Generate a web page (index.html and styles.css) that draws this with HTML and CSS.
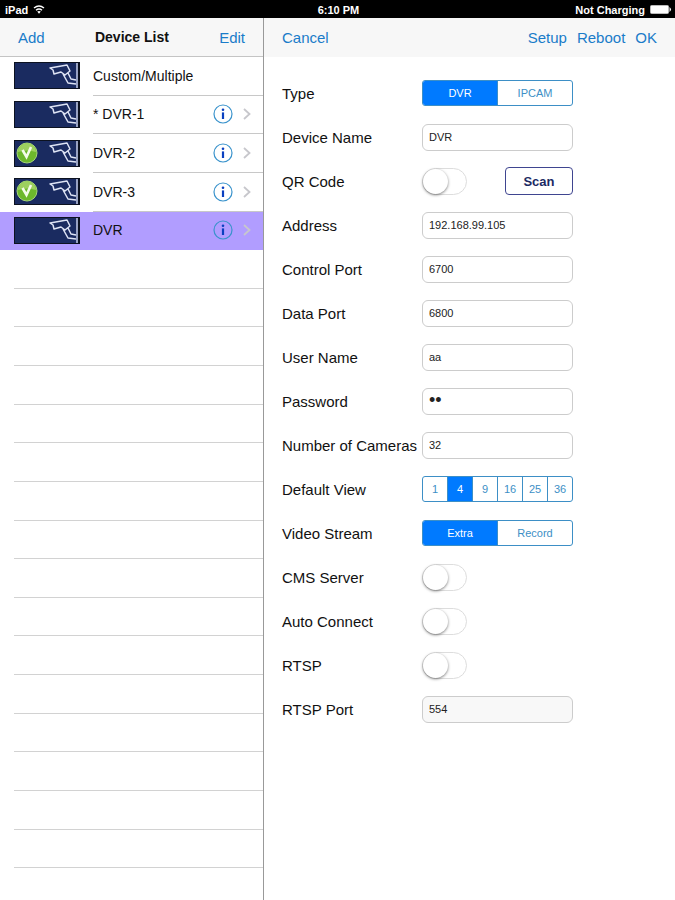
FILE: index.html
```html
<!DOCTYPE html>
<html lang="en">
<head>
    <meta charset="UTF-8">
    <meta name="viewport" content="width=device-width, initial-scale=1.0">
    <title>Device List</title>
    <link rel="stylesheet" href="styles.css">
</head>
<body>
    <svg class="defs" aria-hidden="true">
        <symbol id="camera" viewBox="0 0 66 27">
            <path d="M36 6 L53 3 L56 9 L51 13 L47 10 L40 12 L39 8 Z M49 12 L54 21 L62 22 M54 11 L57 17 L62 18" fill="none" stroke="#dde3f4" stroke-width="1.5" stroke-linejoin="round"/>
            <path d="M63 1 V26" stroke="#b9c2de" stroke-width="1.6"/>
            <rect x="64" y="0" width="2" height="27" fill="#0c1220"/>
        </symbol>
        <symbol id="check" viewBox="0 0 22 22">
            <circle cx="11" cy="11" r="10" fill="#6db82c" stroke="#a6d678" stroke-width="1"/>
            <path d="M2 10 A9 9 0 0 1 20 10 Q11 7 2 10 Z" fill="#9dd05f"/>
            <path d="M6.5 8 L10.5 15 L15 5" fill="none" stroke="#f4fbe9" stroke-width="2.6"/>
        </symbol>
        <symbol id="info" viewBox="0 0 20 20">
            <circle cx="10" cy="10" r="9" fill="none" stroke="#3a93cc" stroke-width="1.2"/>
            <circle cx="10" cy="5.8" r="1.3" fill="#0a40c0"/>
            <path d="M10 8.4 V15" fill="none" stroke="#0a40c0" stroke-width="2.2"/>
        </symbol>
        <symbol id="chevron" viewBox="0 0 8 12">
            <path d="M1 1 L6.5 6 L1 11" fill="none" stroke="#c7c7cc" stroke-width="1.8"/>
        </symbol>
    </svg>

    <header class="status">
        <span class="status-left">iPad
            <svg width="12" height="9" viewBox="0 0 12 9" fill="none" stroke="#fff" stroke-width="1.4">
                <path d="M1 3 Q6 -1 11 3 M3 5.2 Q6 2.6 9 5.2"/>
                <path d="M4.2 6.4 Q6 5.4 7.8 6.4 L6 8.8 Z" fill="#fff" stroke="none"/>
            </svg>
        </span>
        <span>6:10 PM</span>
        <span class="status-right">Not Charging
            <svg width="22" height="9" viewBox="0 0 22 9">
                <rect x="0.5" y="0.5" width="18" height="8" rx="1" fill="#fff" stroke="#bbb"/>
                <path d="M19.5 2 Q22.5 4.5 19.5 7 Z" fill="#fff"/>
            </svg>
        </span>
    </header>

    <main class="panes">
        <section class="sidebar">
            <div class="bar">
                <button class="link">Add</button>
                <h1>Device List</h1>
                <button class="link">Edit</button>
            </div>
            <ul class="devices">
                <li class="device">
                    <svg class="thumb"><use href="#camera"/></svg>
                    <span class="name">Custom/Multiple</span>
                </li>
                <li class="device">
                    <svg class="thumb"><use href="#camera"/></svg>
                    <span class="name">* DVR-1</span>
                    <button class="info" aria-label="Info"><svg width="20" height="20"><use href="#info"/></svg></button>
                    <svg width="8" height="12"><use href="#chevron"/></svg>
                </li>
                <li class="device">
                    <svg class="thumb"><use href="#camera"/><use href="#check" x="2" y="2" width="22" height="22"/></svg>
                    <span class="name">DVR-2</span>
                    <button class="info" aria-label="Info"><svg width="20" height="20"><use href="#info"/></svg></button>
                    <svg width="8" height="12"><use href="#chevron"/></svg>
                </li>
                <li class="device">
                    <svg class="thumb"><use href="#camera"/><use href="#check" x="2" y="2" width="22" height="22"/></svg>
                    <span class="name">DVR-3</span>
                    <button class="info" aria-label="Info"><svg width="20" height="20"><use href="#info"/></svg></button>
                    <svg width="8" height="12"><use href="#chevron"/></svg>
                </li>
                <li class="device selected">
                    <svg class="thumb"><use href="#camera"/></svg>
                    <span class="name">DVR</span>
                    <button class="info" aria-label="Info"><svg width="20" height="20"><use href="#info"/></svg></button>
                    <svg width="8" height="12"><use href="#chevron"/></svg>
                </li>
                <li class="empty"></li>
                <li class="empty"></li>
                <li class="empty"></li>
                <li class="empty"></li>
                <li class="empty"></li>
                <li class="empty"></li>
                <li class="empty"></li>
                <li class="empty"></li>
                <li class="empty"></li>
                <li class="empty"></li>
                <li class="empty"></li>
                <li class="empty"></li>
                <li class="empty"></li>
                <li class="empty"></li>
                <li class="empty"></li>
                <li class="empty"></li>
            </ul>
        </section>

        <section class="detail">
            <div class="bar">
                <button class="link">Cancel</button>
                <div class="actions">
                    <button class="link">Setup</button>
                    <button class="link">Reboot</button>
                    <button class="link">OK</button>
                </div>
            </div>
            <form class="form">
                <div class="row" role="radiogroup" aria-labelledby="type">
                    <span id="type">Type</span>
                    <div class="segments">
                        <label><input type="radio" name="type" checked>DVR</label>
                        <label><input type="radio" name="type">IPCAM</label>
                    </div>
                </div>
                <div class="row">
                    <label for="name">Device Name</label>
                    <input class="field" id="name" type="text" value="DVR">
                </div>
                <div class="row">
                    <label for="qr">QR Code</label>
                    <div class="scan-row">
                        <input class="switch" id="qr" type="checkbox">
                        <button class="scan" type="button">Scan</button>
                    </div>
                </div>
                <div class="row">
                    <label for="address">Address</label>
                    <input class="field" id="address" type="text" value="192.168.99.105">
                </div>
                <div class="row">
                    <label for="control">Control Port</label>
                    <input class="field" id="control" type="text" value="6700">
                </div>
                <div class="row">
                    <label for="data">Data Port</label>
                    <input class="field" id="data" type="text" value="6800">
                </div>
                <div class="row">
                    <label for="user">User Name</label>
                    <input class="field" id="user" type="text" value="aa">
                </div>
                <div class="row">
                    <label for="password">Password</label>
                    <input class="field" id="password" type="password" value="aa">
                </div>
                <div class="row">
                    <label for="cameras">Number of Cameras</label>
                    <input class="field" id="cameras" type="text" value="32">
                </div>
                <div class="row" role="radiogroup" aria-labelledby="view">
                    <span id="view">Default View</span>
                    <div class="segments">
                        <label><input type="radio" name="view">1</label>
                        <label><input type="radio" name="view" checked>4</label>
                        <label><input type="radio" name="view">9</label>
                        <label><input type="radio" name="view">16</label>
                        <label><input type="radio" name="view">25</label>
                        <label><input type="radio" name="view">36</label>
                    </div>
                </div>
                <div class="row" role="radiogroup" aria-labelledby="stream">
                    <span id="stream">Video Stream</span>
                    <div class="segments">
                        <label><input type="radio" name="stream" checked>Extra</label>
                        <label><input type="radio" name="stream">Record</label>
                    </div>
                </div>
                <div class="row">
                    <label for="cms">CMS Server</label>
                    <input class="switch" id="cms" type="checkbox">
                </div>
                <div class="row">
                    <label for="auto">Auto Connect</label>
                    <input class="switch" id="auto" type="checkbox">
                </div>
                <div class="row">
                    <label for="rtsp">RTSP</label>
                    <input class="switch" id="rtsp" type="checkbox">
                </div>
                <div class="row">
                    <label for="rtsp-port">RTSP Port</label>
                    <input class="field" id="rtsp-port" type="text" value="554" disabled>
                </div>
            </form>
        </section>
    </main>
</body>
</html>
```

FILE: styles.css
```css
* {
    box-sizing: border-box;
}

body {
    margin: 0;
    min-height: 100vh;
    display: flex;
    flex-direction: column;
    font-family: "Liberation Sans", Arial, sans-serif;
    font-size: 15px;
    color: #111;
    background-color: #fff;
}

button, input {
    font-family: inherit;
}

.defs {
    display: none;
}

.status {
    display: grid;
    grid-template-columns: 1fr auto 1fr;
    align-items: center;
    height: 18px;
    padding: 1px 3px 0 5px;
    background-color: #000;
    color: #fff;
    font-size: 11px;
    font-weight: bold;
}

.status-left, .status-right {
    display: flex;
    align-items: center;
    gap: 5px;
}

.status-right {
    justify-content: flex-end;
}

.panes {
    flex: 1;
    display: grid;
    grid-template-columns: 264px 1fr;
}

.sidebar {
    display: flex;
    flex-direction: column;
    border-right: 1px solid #999;
}

.bar {
    display: flex;
    align-items: center;
    justify-content: space-between;
    height: 39px;
    padding: 0 18px;
    background-color: #f7f7f7;
}

.sidebar .bar {
    border-bottom: 1px solid #c4c4c4;
}

.bar h1 {
    margin: 0;
    font-size: 14px;
}

.link {
    border: 0;
    padding: 0;
    background: none;
    color: #1a7cc9;
    font-size: 15px;
    cursor: pointer;
}

.actions {
    display: flex;
    gap: 10px;
}

.devices {
    flex: 1;
    display: flex;
    flex-direction: column;
    margin: 0;
    padding: 0 0 32px;
    list-style: none;
}

.device, .empty {
    flex: 1 0 38px;
}

.device {
    display: flex;
    align-items: center;
    padding: 0 12px 1px 14px;
    background: linear-gradient(#c8c8c8, #c8c8c8) 93px 100% / 100% 1px no-repeat;
}

.device.selected {
    background: #b19dff;
}

.device svg {
    flex: none;
}

.device .thumb {
    width: 66px;
    height: 27px;
    margin-right: 13px;
    background-color: #1a2b60;
    outline: 1px solid #0c1220;
    outline-offset: -1px;
}

.name {
    flex: 1;
    font-size: 14px;
}

.empty {
    margin-left: 14px;
    border-bottom: 1px solid #d2d2d2;
}

.info {
    display: flex;
    margin-right: 10px;
    border: 0;
    padding: 0;
    background: none;
    cursor: pointer;
}

.form {
    padding: 14px 18px;
}

.row {
    display: grid;
    grid-template-columns: 140px 151px;
    align-items: center;
    height: 44px;
}

.field {
    width: 100%;
    height: 27px;
    padding: 0 6px 1px;
    border: 1px solid #ccc;
    border-radius: 6px;
    background-color: #fff;
    color: #222;
    font-size: 11px;
}

.field[type="password"] {
    font-size: 18px;
}

.field:disabled {
    background-color: #f8f8f8;
}

.segments {
    display: flex;
    height: 26px;
    border: 1px solid #3d8fc6;
    border-radius: 3px;
    overflow: hidden;
}

.segments label {
    flex: 1;
    display: flex;
    align-items: center;
    justify-content: center;
    color: #3d8fc6;
    font-size: 11px;
    cursor: pointer;
}

.segments label + label {
    border-left: 1px solid #3d8fc6;
}

.segments input {
    appearance: none;
    width: 0;
    height: 0;
    margin: 0;
}

.segments label:has(input:checked) {
    background-color: #007aff;
    color: #fff;
}

.scan-row {
    display: flex;
    align-items: center;
    justify-content: space-between;
}

.scan {
    width: 68px;
    height: 28px;
    border: 1px solid #3f4590;
    border-radius: 4px;
    background-color: #fff;
    color: #1c2a63;
    font-size: 13px;
    font-weight: bold;
}

.switch {
    appearance: none;
    width: 45px;
    height: 27px;
    margin: 0;
    border: 1px solid #ddd;
    border-radius: 14px;
    background-color: #fff;
    cursor: pointer;
}

.switch::before {
    content: "";
    display: block;
    width: 25px;
    height: 25px;
    border-radius: 50%;
    background-color: #fff;
    box-shadow: 0 1px 3px rgba(0, 0, 0, 0.5);
}

.switch:checked {
    background-color: #4cd964;
}

.switch:checked::before {
    margin-left: auto;
}
```
